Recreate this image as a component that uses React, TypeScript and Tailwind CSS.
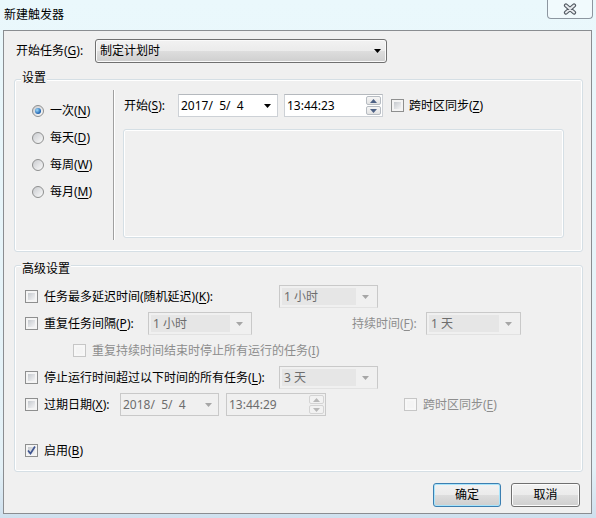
import React from "react"

type Kids = { children?: React.ReactNode }

const U = ({ children }: Kids) => (
    <span className="underline underline-offset-[2px] decoration-[1px]">{children}</span>
)

const Tri = ({ up = false, color = "#000" }: { up?: boolean; color?: string }) => (
    <svg width="7" height="4" viewBox="0 0 7 4" className="shrink-0">
        <path d={up ? "M0 4 L7 4 L3.5 0 Z" : "M0 0 L7 0 L3.5 4 Z"} fill={color} />
    </svg>
)

const Check = ({ checked = false, disabled = false }: { checked?: boolean; disabled?: boolean }) => (
    <span
        className={`w-[13px] h-[13px] shrink-0 border p-[2px] flex ${
            disabled ? "border-[#c6c6c6] bg-[#f7f7f7]" : "border-[#8e8f8f] bg-[#f4f4f4]"
        }`}
    >
        <span
            className={`flex-1 flex items-center justify-center ${
                disabled ? "bg-[#f4f4f4]" : "bg-[linear-gradient(135deg,#c5c9ce,#f4f4f5)]"
            }`}
        >
            {checked && (
                <svg width="9" height="9" viewBox="0 0 9 9" className="-m-[1px]">
                    <path d="M1 4.5 L3.5 7.5 L8 0.5" fill="none" stroke="#3f5590" strokeWidth="1.7" />
                </svg>
            )}
        </span>
    </span>
)

const Radio = ({ checked = false }: { checked?: boolean }) => (
    <span className="w-[12px] h-[12px] shrink-0 rounded-full border border-[#8e8f8f] bg-[linear-gradient(135deg,#c9cbcf,#fbfbfb)] flex items-center justify-center">
        {checked && (
            <span className="w-[6px] h-[6px] rounded-full bg-[radial-gradient(circle_at_35%_35%,#9fdbfa,#1b5fae_70%)]" />
        )}
    </span>
)

const Spinner = ({ disabled = false }: { disabled?: boolean }) => (
    <div className="w-[15px] h-[19px] mr-[1px] flex flex-col gap-[1px]">
        <span
            className={`flex-1 border rounded-[2px] flex items-center justify-center ${
                disabled ? "border-[#d4d4d4] bg-[#f2f2f2]" : "border-[#b7bcc2] bg-[linear-gradient(#f6f6f6,#e3e3e3)]"
            }`}
        >
            <Tri up color={disabled ? "#b8b8b8" : "#4d6185"} />
        </span>
        <span
            className={`flex-1 border rounded-[2px] flex items-center justify-center ${
                disabled ? "border-[#d4d4d4] bg-[#f2f2f2]" : "border-[#b7bcc2] bg-[linear-gradient(#f6f6f6,#e3e3e3)]"
            }`}
        >
            <Tri color={disabled ? "#b8b8b8" : "#4d6185"} />
        </span>
    </div>
)

const DisCombo = ({ className, text }: { className: string; text: string }) => (
    <div className={`${className} h-[23px] shrink-0 border border-[#c9c9c9] border-b-[#e2e2e2] p-[2px] flex items-stretch`}>
        <span className="flex-1 bg-[#e6e6e6] pl-[2px] text-[#6d6d6d] flex items-center whitespace-pre">{text}</span>
        <span className="w-[19px] flex items-center justify-center">
            <Tri color="#a6a6a6" />
        </span>
    </div>
)

const Group = ({ title, className, labelTop, children }: Kids & { title: string; className: string; labelTop: string }) => (
    <div className={`relative ml-[10px] w-[569px] shrink-0 rounded-[3px] border border-[#d5dfe5] shadow-[inset_0_0_0_1px_#ffffff] ${className}`}>
        <span className={`absolute left-[6px] ${labelTop} px-[1px] bg-[#f0f0f0]`}>{title}</span>
        {children}
    </div>
)

const WinButton = ({ children, focused = false, className }: Kids & { focused?: boolean; className: string }) => (
    <button
        className={`${className} h-[24px] rounded-[3px] border bg-[linear-gradient(#f2f2f2_0%,#ebebeb_50%,#dddddd_51%,#cfcfcf_100%)] flex items-center justify-center ${
            focused ? "border-[#3c7fb1] shadow-[inset_0_0_0_1px_#a8e4fb]" : "border-[#707070] shadow-[inset_0_0_0_1px_#fcfcfc]"
        }`}
    >
        {children}
    </button>
)

export default function App() {
    return (
        <div className="w-[596px] h-[518px] overflow-hidden bg-[linear-gradient(#eaf8fc_0%,#e4f1f7_90%,#cfe0ee_100%)] text-[12px] leading-[16px] text-black font-['Noto_Sans','Noto_Sans_CJK_SC',sans-serif]">
            {/* title bar */}
            <div className="h-[30px] flex items-start">
                <span className="ml-[4px] mt-[7px]">新建触发器</span>
                <button className="ml-auto mr-[3px] w-[46px] h-[20px] -mt-px border border-t-0 border-[#8d96a0] rounded-b-[4px] bg-[#f1fafd] flex items-center justify-center">
                    <svg width="16" height="12" viewBox="0 0 16 12">
                        <path d="M4 2.5 L12 9.5 M12 2.5 L4 9.5" stroke="#525962" strokeWidth="4.2" strokeLinecap="round" />
                        <path d="M4 2.5 L12 9.5 M12 2.5 L4 9.5" stroke="#e8ebef" strokeWidth="2" strokeLinecap="round" />
                    </svg>
                </button>
            </div>

            {/* client area */}
            <div className="ml-[3px] w-[589px] h-[484px] border border-[#8a8d91] bg-[#f0f0f0] flex flex-col">
                {/* start task */}
                <div className="mt-[8px] h-[24px] flex items-center">
                    <span className="w-[91px] pl-[12px] shrink-0">
                        开始任务(<U>G</U>):
                    </span>
                    <div className="w-[292px] h-[24px] rounded-[3px] border border-[#707070] bg-[linear-gradient(#f2f2f2_0%,#ebebeb_50%,#dddddd_51%,#cfcfcf_100%)] shadow-[inset_0_0_0_1px_#fafafa] flex items-center pl-[4px] pr-[5px]">
                        <span className="flex-1">制定计划时</span>
                        <Tri />
                    </div>
                </div>

                {/* settings group */}
                <Group title="设置" className="mt-[16px] h-[173px] flex" labelTop="-top-[10px]">
                    <div className="w-[98px] shrink-0 pl-[17px] pt-[23px] flex flex-col gap-[11px]">
                        <label className="h-[16px] flex items-center gap-[6px]">
                            <Radio checked />
                            <span>
                                一次(<U>N</U>)
                            </span>
                        </label>
                        <label className="h-[16px] flex items-center gap-[6px]">
                            <Radio />
                            <span>
                                每天(<U>D</U>)
                            </span>
                        </label>
                        <label className="h-[16px] flex items-center gap-[6px]">
                            <Radio />
                            <span>
                                每周(<U>W</U>)
                            </span>
                        </label>
                        <label className="h-[16px] flex items-center gap-[6px]">
                            <Radio />
                            <span>
                                每月(<U>M</U>)
                            </span>
                        </label>
                    </div>
                    <div className="mt-[10px] h-[150px] w-[2px] border-l border-[#a0a0a0] border-r border-r-white" />
                    <div className="pl-[8px] flex flex-col">
                        <div className="mt-[14px] h-[23px] flex items-center">
                            <span className="ml-[1px] w-[54px] shrink-0">
                                开始(<U>S</U>):
                            </span>
                            <div className="w-[100px] h-[23px] border border-[#cdd1d6] border-t-[#b5b9be] bg-white flex items-center pl-[2px]">
                                <span className="flex-1 whitespace-pre">2017/  5/  4</span>
                                <span className="w-[19px] flex justify-center">
                                    <Tri />
                                </span>
                            </div>
                            <div className="ml-[6px] w-[99px] h-[23px] border border-[#cdd1d6] border-t-[#b5b9be] bg-white flex items-center pl-[2px]">
                                <span className="flex-1">13:44:23</span>
                                <Spinner />
                            </div>
                            <span className="ml-[8px]">
                                <Check />
                            </span>
                            <span className="ml-[5px]">
                                跨时区同步(<U>Z</U>)
                            </span>
                        </div>
                        <div className="mt-[12px] w-[441px] h-[109px] rounded-[3px] border border-[#d5dfe5] shadow-[inset_0_0_0_1px_#ffffff]" />
                    </div>
                </Group>

                {/* advanced group */}
                <Group title="高级设置" className="mt-[13px] h-[207px] pl-[10px] pt-[19px] flex flex-col gap-[4px]" labelTop="-top-[5px]">
                    <div className="h-[23px] flex items-center">
                        <Check />
                        <span className="ml-[6px] w-[235px] shrink-0">
                            任务最多延迟时间(随机延迟)(<U>K</U>):
                        </span>
                        <DisCombo className="w-[99px]" text="1 小时" />
                    </div>
                    <div className="h-[23px] flex items-center">
                        <Check />
                        <span className="ml-[6px] w-[104px] shrink-0">
                            重复任务间隔(<U>P</U>):
                        </span>
                        <DisCombo className="w-[104px]" text="1 小时" />
                        <span className="ml-[100px] w-[74px] shrink-0 text-[#8d8d8d]">
                            持续时间(<U>F</U>):
                        </span>
                        <DisCombo className="w-[95px]" text="1 天" />
                    </div>
                    <div className="h-[23px] flex items-center pl-[48px]">
                        <Check disabled />
                        <span className="ml-[6px] text-[#8d8d8d]">
                            重复持续时间结束时停止所有运行的任务(<U>I</U>)
                        </span>
                    </div>
                    <div className="h-[23px] flex items-center">
                        <Check />
                        <span className="ml-[6px] w-[235px] shrink-0">
                            停止运行时间超过以下时间的所有任务(<U>L</U>):
                        </span>
                        <DisCombo className="w-[99px]" text="3 天" />
                    </div>
                    <div className="h-[23px] flex items-center">
                        <Check />
                        <span className="ml-[6px] w-[76px] shrink-0">
                            过期日期(<U>X</U>):
                        </span>
                        <div className="w-[99px] h-[23px] shrink-0 border border-[#c9c9c9] flex items-center pl-[2px] text-[#6d6d6d]">
                            <span className="flex-1 whitespace-pre">2018/  5/  4</span>
                            <span className="w-[19px] flex justify-center">
                                <Tri color="#a6a6a6" />
                            </span>
                        </div>
                        <div className="ml-[7px] w-[100px] h-[23px] shrink-0 border border-[#c9c9c9] flex items-center pl-[2px] text-[#6d6d6d]">
                            <span className="flex-1">13:44:29</span>
                            <Spinner disabled />
                        </div>
                        <span className="ml-[78px]">
                            <Check disabled />
                        </span>
                        <span className="ml-[6px] text-[#8d8d8d]">
                            跨时区同步(<U>E</U>)
                        </span>
                    </div>
                    <div className="mt-[19px] h-[23px] flex items-center">
                        <Check checked />
                        <span className="ml-[6px]">
                            启用(<U>B</U>)
                        </span>
                    </div>
                </Group>

                {/* buttons */}
                <div className="mt-[11px] pr-[11px] flex justify-end gap-[10px]">
                    <WinButton focused className="w-[68px]">
                        确定
                    </WinButton>
                    <WinButton className="w-[69px]">取消</WinButton>
                </div>
            </div>
        </div>
    )
}
